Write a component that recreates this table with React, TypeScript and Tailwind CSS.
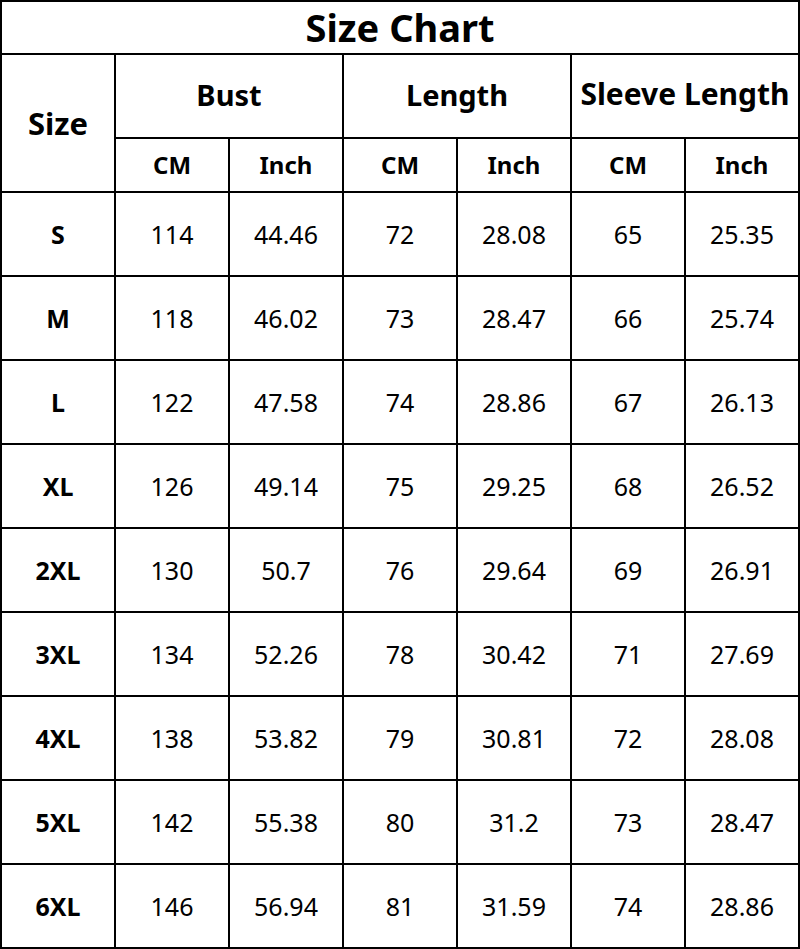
const sizes = [
  ['S', '114', '44.46', '72', '28.08', '65', '25.35'],
  ['M', '118', '46.02', '73', '28.47', '66', '25.74'],
  ['L', '122', '47.58', '74', '28.86', '67', '26.13'],
  ['XL', '126', '49.14', '75', '29.25', '68', '26.52'],
  ['2XL', '130', '50.7', '76', '29.64', '69', '26.91'],
  ['3XL', '134', '52.26', '78', '30.42', '71', '27.69'],
  ['4XL', '138', '53.82', '79', '30.81', '72', '28.08'],
  ['5XL', '142', '55.38', '80', '31.2', '73', '28.47'],
  ['6XL', '146', '56.94', '81', '31.59', '74', '28.86'],
]

const cell = 'bg-white flex items-center justify-center text-black'

export default function App() {
  return (
    <div className="w-[800px] h-[949px] bg-white" style={{ fontFamily: '"Noto Sans", "Open Sans", sans-serif' }}>
      <div className="grid grid-cols-[repeat(7,112px)] grid-rows-[51px_82px_52px_repeat(9,82px)] gap-[2px] p-[2px] bg-black w-[800px] leading-none">
        {/* Title */}
        <div className={`${cell} col-span-7 text-[38px] font-bold pb-[2px]`}>Size Chart</div>

        {/* Header rows */}
        <div className={`${cell} row-span-2 text-[31px] font-bold`}>Size</div>
        <div className={`${cell} col-span-2 text-[29px] font-bold pb-[4px]`}>Bust</div>
        <div className={`${cell} col-span-2 text-[29px] font-bold pb-[4px]`}>Length</div>
        <div className={`${cell} col-span-2 text-[30px] font-bold whitespace-nowrap pb-[4px]`}>Sleeve Length</div>
        {['CM', 'Inch', 'CM', 'Inch', 'CM', 'Inch'].map((h, i) => (
          <div key={i} className={`${cell} text-[24px] font-bold`}>
            {h}
          </div>
        ))}

        {/* Data */}
        {sizes.map((row) =>
          row.map((v, i) => (
            <div key={row[0] + i} className={`${cell} text-[25px] ${i === 0 ? 'font-bold' : 'font-normal'}`}>
              {v}
            </div>
          ))
        )}
      </div>
    </div>
  )
}
